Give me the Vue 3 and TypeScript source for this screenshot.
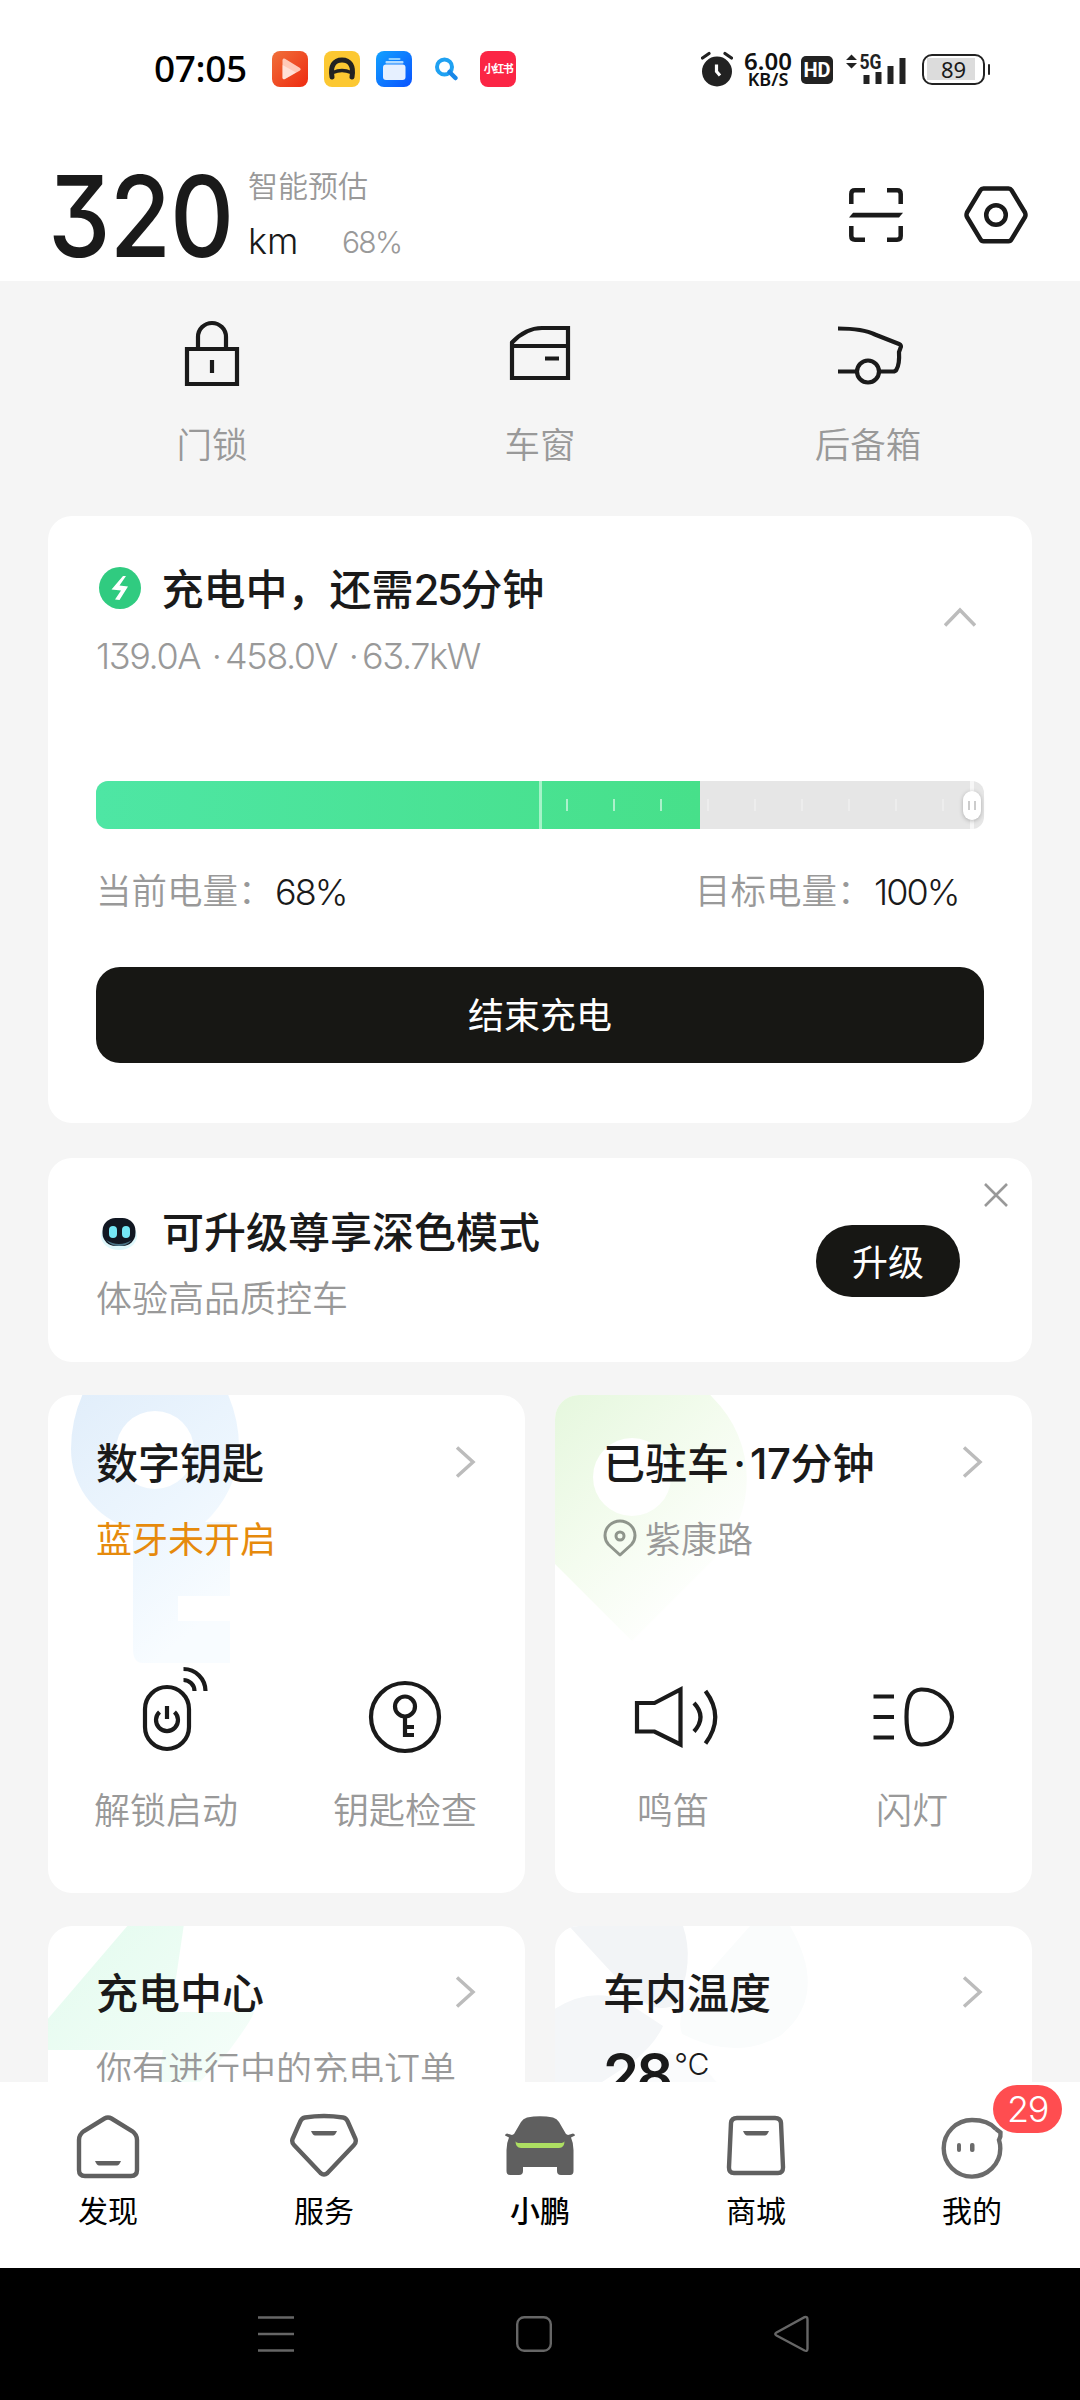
<script setup lang="ts">
interface Tab { id: string; label: string; active?: boolean; badge?: number }

const level = 68
const ticks: number[] = Array.from({ length: 9 }, (_, i) => 470 + i * 47)
const tabs: Tab[] = [
  { id: 'home', label: '发现' },
  { id: 'service', label: '服务' },
  { id: 'car', label: '小鹏', active: true },
  { id: 'mall', label: '商城' },
  { id: 'me', label: '我的', badge: 29 },
]
</script>

<template>
  <div class="phone">
    <header class="status">
      <span class="clock">07:05</span>
      <div class="apps">
        <svg width="36" height="36" viewBox="0 0 36 36">
          <defs><linearGradient id="gr" x1="0" y1="0" x2="1" y2="1"><stop offset="0" stop-color="#f0703a" /><stop offset="1" stop-color="#ee2a10" /></linearGradient></defs>
          <rect width="36" height="36" rx="8" fill="url(#gr)" />
          <path d="M10.500 9V27Q11 29 13 28L28 19.500Q29.500 18 28 17L13 7.800Q11 7 10.500 9Z" fill="#ffc9b8" />
          <path d="M10.500 14L24 21.500L13 28Q11 29 10.500 27Z" fill="#fff" opacity=".45" />
        </svg>
        <svg width="36" height="36" viewBox="0 0 36 36">
          <rect width="36" height="36" rx="8" fill="#fcc832" />
          <path d="M8 26C6 15 10 9 18 9S30 15 28 26" fill="none" stroke="#222" stroke-width="5" stroke-linecap="round" />
          <path d="M9 21.500Q18 17.500 27 21.500" fill="none" stroke="#222" stroke-width="3.500" />
        </svg>
        <svg width="36" height="36" viewBox="0 0 36 36">
          <defs><linearGradient id="gb" x1="0" y1="0" x2="1" y2="1"><stop offset="0" stop-color="#12a2ff" /><stop offset="1" stop-color="#0a52ff" /></linearGradient></defs>
          <rect width="36" height="36" rx="8" fill="url(#gb)" />
          <rect x="12.500" y="7" width="12" height="2" rx="1" fill="#8fd0ff" />
          <rect x="9.500" y="10" width="18" height="2.400" rx="1" fill="#b4dcff" />
          <rect x="7" y="13.500" width="22.500" height="15.500" rx="3" fill="#e6f0ff" />
        </svg>
        <svg width="36" height="36" viewBox="0 0 36 36">
          <circle cx="16.500" cy="16" r="7.500" fill="none" stroke="#1fa1f2" stroke-width="4" />
          <path d="M21.500 21L27.500 27" stroke="#1787e8" stroke-width="4.500" stroke-linecap="round" />
        </svg>
        <span class="xhs">小红书</span>
      </div>
      <div class="sys">
        <svg width="32" height="36" viewBox="0 0 32 36">
          <circle cx="16" cy="20.500" r="15" fill="#222" />
          <path d="M1.500 7L8 2.500M30.500 7L24 2.500" stroke="#222" stroke-width="3.200" stroke-linecap="round" />
          <path d="M15.500 13.500V20.500L19 24.500" fill="none" stroke="#fff" stroke-width="3.200" />
        </svg>
        <div class="speed"><span>6.00</span><span>KB/S</span></div>
        <span class="hd">HD</span>
        <svg class="signal" width="60" height="34" viewBox="0 0 60 34">
          <path d="M0 8L5.500 2.500L11 8ZM0 11L5.500 16.500L11 11Z" fill="#222" />
          <text x="13.500" y="16.500" class="g5" textLength="22" lengthAdjust="spacingAndGlyphs">5G</text>
          <path d="M20.500 23V32M32.500 20V32M44.500 14V32M56.500 6V32" stroke="#222" stroke-width="6" />
        </svg>
        <div class="battery"><span>89</span></div>
      </div>
    </header>

    <section class="head">
      <span class="range">320</span>
      <div class="est">
        <span class="est-t">智能预估</span>
        <div class="est-b"><span class="km">km</span><span class="pct">68%</span></div>
      </div>
      <svg class="scan" width="54" height="54" viewBox="0 0 54 54" fill="none" stroke="#1a1a1a" stroke-width="4.500">
        <path d="M2.300 16V6Q2.300 2.300 6 2.300H16M38 2.300H48Q51.700 2.300 51.700 6V16M51.700 38V48Q51.700 51.700 48 51.700H38M16 51.700H6Q2.300 51.700 2.300 48V38" />
        <path d="M0 29.500L4 24.700H54L50 29.500Z" fill="#1a1a1a" stroke="none" />
      </svg>
      <svg width="64" height="58" viewBox="0 0 64 58" fill="none" stroke="#1a1a1a" stroke-width="4.500" stroke-linejoin="round">
        <path d="M19.500 2.500H44.500Q46.500 2.500 47.500 4.200L61 26.500Q62 29 61 31L47.500 53.300Q46.500 55.300 44.500 55.300H19.500Q17.500 55.300 16.500 53.300L3 31Q2 29 3 26.500L16.500 4.200Q17.500 2.500 19.500 2.500Z" />
        <circle cx="32" cy="29" r="9.800" />
      </svg>
    </section>

    <main class="body">
      <div class="quick">
        <div class="q">
          <svg width="72" height="72" viewBox="0 0 72 72" class="ico"><path d="M11 32H61V67H11ZM22 31V20A14 14 0 0 1 50 20V31M36 43V56" /></svg>
          <span>门锁</span>
        </div>
        <div class="q">
          <svg width="72" height="72" viewBox="0 0 72 72" class="ico"><path d="M8 61V25.500C17 16 26 11 38 11H64V61ZM8 29H64M41 41.500H55" /></svg>
          <span>车窗</span>
        </div>
        <div class="q">
          <svg width="72" height="72" viewBox="0 0 72 72" class="ico"><path d="M6 11.500C22 11.500 34 13 43 17.500L67 27Q70 28.500 68.500 31L67 35C67.500 43 66.500 49 64.500 52.500Q63.500 54.500 61 54.500H48M6 54.500H24" /><circle cx="36" cy="54.500" r="11" /></svg>
          <span>后备箱</span>
        </div>
      </div>

      <section class="card charge">
        <div class="c-title">
          <svg width="44" height="44" viewBox="0 0 44 44"><circle cx="22" cy="22" r="21" fill="#30cb80" /><path d="M25 10L13.500 23.500L23 24.500L17 33.500L21.500 34L30 20.500L21.500 19.500L28 10Z" fill="#fff" /></svg>
          <span class="h">充电中，还需<i class="n">25</i>分钟</span>
          <svg class="up" width="32" height="20" viewBox="0 0 32 20" fill="none" stroke="#bcbcbc" stroke-width="3.500"><path d="M1 18.500L16 3L31 18.500" /></svg>
        </div>
        <div class="c-sub">139.0A <i>·</i>458.0V <i>·</i>63.7kW</div>
        <div class="bar">
          <div class="clip"><div class="fill" :style="{ width: (level + 0.05) + '%' }"></div></div>
          <i class="mid"></i>
          <i v-for="t in ticks" :key="t" class="tick" :class="{ dim: t > 604 }" :style="{ left: t + 'px' }"></i>
          <i class="track-end"></i>
          <span class="knob"><i></i><i></i></span>
        </div>
        <div class="levels">
          <span class="g">当前电量：</span><span class="v">68%</span>
          <span class="g right">目标电量：</span><span class="v v2">100%</span>
        </div>
        <button class="stop">结束充电</button>
      </section>

      <section class="card upgrade">
        <div class="u-text">
          <div class="u-title">
            <svg width="44" height="40" viewBox="0 0 44 40">
              <ellipse cx="23" cy="25" rx="18" ry="14" fill="#c9f4fa" opacity=".6" />
              <rect x="6.500" y="7" width="33" height="28" rx="13" fill="#111722" />
              <path d="M10 29Q23 37 36 29Q31 35 23 35T10 29Z" fill="#4b7486" />
              <rect x="13" y="15" width="8" height="12" rx="4" fill="#74e6f5" /><rect x="26" y="15" width="8" height="12" rx="4" fill="#74e6f5" />
            </svg>
            <span class="h">可升级尊享深色模式</span>
          </div>
          <div class="u-sub">体验高品质控车</div>
        </div>
        <button class="up-btn">升级</button>
        <svg class="close" width="24" height="24" viewBox="0 0 24 24" stroke="#999" stroke-width="2.600"><path d="M1 1L23 23M23 1L1 23" /></svg>
      </section>

      <div class="grid">
        <section class="card tile">
          <svg class="art" width="477" height="498" viewBox="0 0 477 498">
            <defs><linearGradient id="key" x1="0" y1="0" x2=".5" y2="1"><stop offset="0" stop-color="#e0edfa" /><stop offset=".6" stop-color="#edf6fe" /><stop offset="1" stop-color="#f8fcff" /></linearGradient></defs>
            <path fill="url(#key)" fill-rule="evenodd" d="M45 -20H170Q191 15 191 52C191 82 176 110 157 127H182V201H130V226H182V268H95Q85 268 85 254V135C50 124 23 94 23 54Q23 15 45 -20ZM107 16A39 39 0 1 0 107 94A39 39 0 1 0 107 16Z" />
          </svg>
          <div class="t-title"><span class="h">数字钥匙</span><svg class="chev" width="22" height="32" viewBox="0 0 22 32"><path d="M2 1.500L18 16L2 30.500" /></svg></div>
          <div class="t-sub warn">蓝牙未开启</div>
          <div class="acts">
            <div class="a">
              <svg width="90" height="90" viewBox="0 0 90 90" class="ico"><rect x="24" y="23" width="44" height="62" rx="22" /><path d="M38.500 48A11 11 0 1 0 53.500 48M46 42V55M62.500 5A22 22 0 0 1 84.500 27M62.500 16A11 11 0 0 1 73.500 27" /></svg>
              <span>解锁启动</span>
            </div>
            <div class="a">
              <svg width="90" height="90" viewBox="0 0 90 90" class="ico"><circle cx="45" cy="53" r="34" /><circle cx="45" cy="42.500" r="10" /><path d="M45 52.500V73M45 63H54M45 71H54" /></svg>
              <span>钥匙检查</span>
            </div>
          </div>
        </section>
        <section class="card tile">
          <svg class="art" width="477" height="498" viewBox="0 0 477 498">
            <defs><linearGradient id="pin" x1="0" y1="0" x2=".8" y2="1"><stop offset="0" stop-color="#e4f7dc" /><stop offset=".5" stop-color="#f4fcef" /><stop offset=".9" stop-color="#fff" /></linearGradient></defs>
            <path fill="url(#pin)" fill-rule="evenodd" d="M-4 165L77 246L158 165A114 114 0 0 0 158 3L150 -6H-10V159ZM77 43A39 39 0 1 0 77 121A39 39 0 1 0 77 43Z" />
          </svg>
          <div class="t-title"><span class="h">已驻车<i class="dot">·</i><i class="n2">17</i>分钟</span><svg class="chev" width="22" height="32" viewBox="0 0 22 32"><path d="M2 1.500L18 16L2 30.500" /></svg></div>
          <div class="t-sub loc">
            <svg width="34" height="38" viewBox="0 0 34 38" fill="none" stroke="#8f958c" stroke-width="3"><path d="M17 36L5.500 25.500Q2 21.500 2 16.500A15 14.500 0 0 1 32 16.500Q32 21.500 28.500 25.500Z" stroke-linejoin="round" /><circle cx="17" cy="17" r="4" /></svg>
            <span>紫康路</span>
          </div>
          <div class="acts">
            <div class="a">
              <svg width="90" height="90" viewBox="0 0 90 90" class="ico"><path d="M9 39H26.500L52.500 25.500V80.500L26.500 67.500H9ZM66 39Q79 53 66 67.500M77.500 27Q97 53 77.500 79.500" /></svg>
              <span>鸣笛</span>
            </div>
            <div class="a">
              <svg width="90" height="90" viewBox="0 0 90 90" class="ico"><path d="M6.500 32.500H27M6.500 53H27M6.500 73.500H27M39.500 53C39.500 34 44 26 54 25.500C72 25 85 40 85 53S72 81 54 80.500C44 80 39.500 72 39.500 53Z" /></svg>
              <span>闪灯</span>
            </div>
          </div>
        </section>
        <section class="card tile short">
          <svg class="art" width="477" height="300" viewBox="0 0 477 300">
            <defs><linearGradient id="bolt" x1="0" y1="0" x2="1" y2="1"><stop offset="0" stop-color="#e3fbee" /><stop offset="1" stop-color="#f8fefb" /></linearGradient></defs>
            <path fill="url(#bolt)" d="M81 -2H136L123 86H206Q204 94 180 126L120 190L108 170L115 124H-2V95Z" />
          </svg>
          <div class="t-title"><span class="h">充电中心</span><svg class="chev" width="22" height="32" viewBox="0 0 22 32"><path d="M2 1.500L18 16L2 30.500" /></svg></div>
          <div class="t-sub">你有进行中的充电订单</div>
        </section>
        <section class="card tile short">
          <svg class="art" width="477" height="300" viewBox="0 0 477 300">
            <path fill="#f2f4f6" d="M14 0H128Q140 35 122 78Q100 90 74 65Q55 45 14 0Z" />
            <path fill="#fafcfc" d="M195 0H235Q275 70 225 110Q180 135 127 108Q120 90 140 62Z" />
            <path fill="#f4f6f8" d="M-2 84Q35 60 70 75L108 100Q100 118 78 136L44 158Q20 175 -2 175Z" />
            <path fill="#fafbfc" d="M98 124Q145 130 164 160L150 200H80Z" />
          </svg>
          <div class="t-title"><span class="h">车内温度</span><svg class="chev" width="22" height="32" viewBox="0 0 22 32"><path d="M2 1.500L18 16L2 30.500" /></svg></div>
          <div class="temp"><span>28</span><i>℃</i></div>
        </section>
      </div>
    </main>

    <nav class="tabs">
      <div v-for="t in tabs" :key="t.id" class="tab" :class="{ on: t.active }">
        <svg width="76" height="68" viewBox="0 0 76 68" fill="none" stroke="#606060" stroke-width="4.400">
          <g v-if="t.id === 'home'">
            <path d="M34.500 5.500Q38 3.500 41.500 5.500L62 18Q67 21.500 67 27V57Q67 63 61 63H15Q9 63 9 57V27Q9 21.500 14 18Z" />
            <path d="M25 48H51Q49 52.500 47 52.500H29Q27 52.500 25 48Z" fill="#606060" stroke="none" />
          </g>
          <g v-else-if="t.id === 'service'">
            <path d="M19 4.500Q38 1.500 57 4.500Q60 5 61.500 8L69.500 26Q70.500 29.500 68 32L41.500 60Q38 63 34.500 60L8 32Q5.500 29.500 6.500 26L14.500 8Q16 5 19 4.500Z" />
            <path d="M25 18H51Q49 22.500 47 22.500H29Q27 22.500 25 18Z" fill="#606060" stroke="none" />
          </g>
          <g v-else-if="t.id === 'car'" stroke="none">
            <path fill="#5f5f5f" d="M25 4.500Q38 2 51 4.500Q55 5.500 57 9L64 21L66 22L71 20.500Q73 21 73 22.500L69 24.500Q71.500 30 71.500 37V58Q71.500 62 68 62H59Q55 62 55 58V54H21V58Q21 62 17 62H8Q4.500 62 4.500 58V37Q4.500 30 7 24.500L3 22.500Q3 21 5 20.500L10 22L12 21L19 9Q21 5.500 25 4.500Z" />
            <path fill="#addf62" d="M13.500 28Q14 30 18 30H58Q62 30 62.500 28Q62.500 35 57 35H19Q13.500 35 13.500 28Z" />
          </g>
          <g v-else-if="t.id === 'mall'">
            <path d="M19 5H57Q62.500 5 63 10L65 54Q65.200 60 60 60H16Q10.800 60 11 54L13 10Q13.500 5 19 5Z" />
            <path d="M25 18H51Q49 22.500 47 22.500H29Q27 22.500 25 18Z" fill="#606060" stroke="none" />
          </g>
          <g v-else stroke="#6b6b6b">
            <path d="M62 16C55 8 46 7 38 7A28.300 28.300 0 1 0 66.300 35.500Q66.300 31 65 27Q67 23 66.500 19.500L62 16" />
            <rect x="23" y="30" width="4" height="9" rx="2" fill="#6b6b6b" stroke="none" /><rect x="36" y="30" width="4.500" height="9" rx="2" fill="#6b6b6b" stroke="none" />
          </g>
        </svg>
        <span class="label">{{ t.label }}</span>
        <span v-if="t.badge" class="badge">{{ t.badge }}</span>
      </div>
    </nav>

    <footer class="sysnav">
      <svg width="36" height="38" viewBox="0 0 36 38"><path d="M0 2.500H36M0 19H36M0 35.500H36" /></svg>
      <svg width="36" height="38" viewBox="0 0 36 38"><rect x="1.200" y="2.200" width="33.600" height="33.600" rx="7" /></svg>
      <svg width="36" height="38" viewBox="0 0 36 38"><path d="M2.500 17.500L30.500 2.200Q33.500 1.200 33.500 4.500V33.500Q33.500 36.800 30.500 35.500L2.500 20.500Q0 19 2.500 17.500Z" /></svg>
    </footer>
  </div>
</template>

<style>
body { margin: 0; background: #fff; }
</style>

<style scoped>
.phone { width: 1080px; height: 2400px; display: flex; flex-direction: column; overflow: hidden; background: #fff; color: #1a1a1a; font-family: Inter, "Noto Sans CJK SC", sans-serif; font-feature-settings: "cv09"; }
.phone *, .phone { box-sizing: border-box; }
i { font-style: normal; }
svg { display: block; flex: none; }
button { border: 0; padding: 0; font: inherit; color: #fff; background: #171714; }
.ico { fill: none; stroke: #1a1a1a; stroke-width: 4.2; }

.status { height: 138px; display: flex; align-items: center; padding-left: 154px; }
.clock { width: 118px; font: 500 37px/44px "Noto Sans", sans-serif; color: #000; letter-spacing: -.4px; white-space: nowrap; position: relative; top: -1px; }
.apps { display: flex; gap: 16px; }
.xhs { width: 36px; height: 36px; border-radius: 8px; background: #fb2545; color: #fff; font-size: 11px; font-weight: 700; line-height: 36px; text-align: center; letter-spacing: -1.500px; white-space: nowrap; }
.sys { margin-left: 185px; display: flex; align-items: center; }
.speed { width: 56px; margin-left: 7px; display: flex; flex-direction: column; align-items: center; color: #111; font-family: "Noto Sans", sans-serif; }
.speed span:first-child { font-size: 24px; line-height: 19px; font-weight: 600; }
.speed span:last-child { font-size: 18px; line-height: 18px; font-weight: 600; }
.hd { width: 32px; height: 28px; margin-left: 5px; margin-top: 2px; border-radius: 5px; background: #222; color: #fff; font: 700 20px/28px Roboto, sans-serif; text-align: center; }
.signal { margin-left: 13px; }
.g5 { font: 700 20px Roboto, sans-serif; fill: #222; }
.battery { position: relative; width: 63px; height: 31px; margin-left: 16px; border: 2.500px solid #222; border-radius: 10px; display: flex; align-items: center; justify-content: center; font: 400 22px/26px "Noto Sans", sans-serif; background: linear-gradient(#dcdcdc, #dcdcdc) 3px 50% / 48px 22px no-repeat; }
.battery::after { content: ""; position: absolute; right: -7px; top: 8px; width: 2.500px; height: 11px; background: #222; border-radius: 1px; }

.head { height: 143px; display: flex; padding: 0 52px 0 48px; }
.range { width: 200px; font-size: 113px; font-weight: 500; line-height: 156px; letter-spacing: -1px; transform: scaleX(.88); transform-origin: 0 50%; }
.est { flex: 1; padding-top: 27px; }
.est-t { display: block; font-size: 30px; line-height: 42px; font-weight: 350; color: #999; }
.est-b { display: flex; align-items: baseline; margin-top: 10px; }
.km { width: 94px; font-size: 36px; line-height: 48px; font-weight: 350; }
.pct { font-size: 30px; font-weight: 350; color: #999; letter-spacing: -1.700px; position: relative; top: -1px; }
.scan { margin: 50px 61px 0 0; }
.scan + svg { margin-top: 48px; }

.body { height: 1801px; overflow: hidden; background: #f5f5f5; padding: 0 48px; flex: none; }
.quick { height: 235px; display: grid; grid-template-columns: repeat(3, 1fr); padding-top: 36px; }
.q { display: flex; flex-direction: column; align-items: center; font-size: 35.500px; font-weight: 350; color: #999; line-height: 50px; gap: 32px; }
.card { background: #fff; border-radius: 24px; position: relative; overflow: hidden; }
.h { font-size: 42px; font-weight: 500; line-height: 60px; white-space: nowrap; position: relative; top: 1.500px; }
.n { letter-spacing: -2.500px; }
.n2 { letter-spacing: -.5px; }

.charge { height: 607px; padding: 42px 48px 0; }
.c-title { display: flex; align-items: center; height: 60px; }
.c-title .h { margin-left: 19.500px; }
.c-title > svg:first-child { margin-left: 2px; }
.up { margin-left: auto; margin-right: 8px; position: relative; top: 29px; }
.c-sub { margin-top: 14px; font-size: 36px; line-height: 48px; font-weight: 300; color: #999; letter-spacing: -1.400px; word-spacing: 3px; white-space: nowrap; }
.c-sub i { letter-spacing: 3px; }
.bar { position: relative; height: 48px; margin-top: 101px; }
.clip { height: 48px; border-radius: 12px; overflow: hidden; background: #e6e6e6; }
.fill { height: 48px; background: linear-gradient(90deg, #4ee6a4, #47e08a); }
.mid { position: absolute; left: 443px; top: 0; width: 3px; height: 48px; background: #a5f3c8; }
.tick { position: absolute; top: 18px; width: 2px; height: 12px; background: #fff; opacity: .55; }
.tick.dim { opacity: .3; }
.track-end { position: absolute; left: 874px; top: 0; width: 4px; height: 48px; background: #f6f6f6; }
.knob { position: absolute; left: 867px; top: 10px; width: 18px; height: 29px; border-radius: 9px; background: #fff; box-shadow: 0 1px 4px rgba(0, 0, 0, .25); display: flex; justify-content: center; align-items: center; gap: 4px; }
.knob i { width: 2px; height: 9px; background: #ccc; }
.levels { display: flex; align-items: center; margin-top: 39px; height: 48px; font-size: 36px; line-height: 48px; white-space: nowrap; }
.g { width: 179px; color: #999; font-weight: 350; font-size: 35.500px; }
.g.right { margin-left: auto; }
.v { font-weight: 350; letter-spacing: -2px; }
.v2 { width: 110px; }
.stop { display: block; width: 888px; height: 96px; margin-top: 51px; border-radius: 24px; font-size: 36px; line-height: 99px; font-weight: 400; }

.upgrade { height: 204px; margin-top: 35px; display: flex; padding: 43px 72px 0 48px; }
.u-text { flex: 1; }
.u-title { display: flex; align-items: center; height: 60px; gap: 22px; }
.u-sub { margin-top: 13.500px; font-size: 36px; line-height: 48px; font-weight: 350; color: #999; }
.up-btn { width: 144px; height: 72px; margin-top: 24px; border-radius: 36px; font-size: 36px; line-height: 76px; }
.close { position: absolute; right: 24px; top: 25px; }

.grid { margin-top: 33px; display: grid; grid-template-columns: 477px 477px; column-gap: 30px; row-gap: 33px; grid-auto-rows: 498px; }
.tile { padding: 37px 48px 0; }
.short { padding-top: 36px; }
.art { position: absolute; left: 0; top: 0; }
.t-title { position: relative; display: flex; align-items: center; justify-content: space-between; height: 60px; padding-right: 0; }
.chev { fill: none; stroke: #bcbcbc; stroke-width: 3.500; }
.dot { display: inline-block; width: 21px; text-align: center; }
.t-sub { position: relative; margin-top: 23px; height: 50px; font-size: 36px; line-height: 50px; font-weight: 350; color: #999; white-space: nowrap; }
.warn { color: #e68a0c; font-weight: 400; }
.loc { display: flex; align-items: center; gap: 8px; }
.loc svg { margin: -5px 0 0 0; }
.acts { position: relative; display: flex; justify-content: space-between; margin: 99px -23px 0 -25px; }
.a { width: 190px; display: flex; flex-direction: column; align-items: center; gap: 32px; font-size: 36px; font-weight: 350; line-height: 50px; color: #999; white-space: nowrap; }
.temp { position: relative; display: flex; margin-top: 17px; }
.temp span { font-size: 58px; line-height: 72px; font-weight: 600; letter-spacing: -3px; }
.temp i { font-size: 30px; line-height: 50px; margin-left: 4px; font-weight: 350; }

.tabs { height: 186px; display: grid; grid-template-columns: repeat(5, 1fr); background: #fff; flex: none; }
.tab { position: relative; display: flex; flex-direction: column; align-items: center; padding-top: 31px; }
.label { margin-top: 9px; font-size: 30px; line-height: 43px; color: #000; }
.on .label { font-weight: 500; }
.badge { position: absolute; left: 129px; top: 3px; width: 69px; height: 48px; border-radius: 24px; background: #ff4d50; color: #fff; font-size: 36px; line-height: 49px; font-weight: 300; text-align: center; letter-spacing: -1.500px; }
.sysnav { height: 132px; background: #000; display: flex; gap: 222px; padding: 47px 0 0 258px; flex: none; }
.sysnav svg { fill: none; stroke: #666; stroke-width: 2.400; }
</style>
